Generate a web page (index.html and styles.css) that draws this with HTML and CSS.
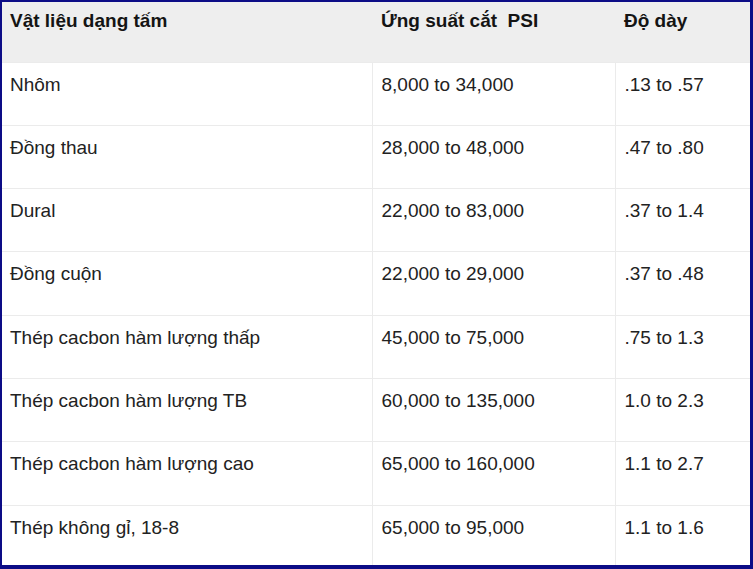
FILE: index.html
```html
<!DOCTYPE html>
<html lang="vi">
<head>
<meta charset="utf-8">
<link rel="stylesheet" href="styles.css">
</head>
<body>
<div class="frame">
<table class="tbl">
<colgroup><col class="c1"><col class="c2"><col class="c3"></colgroup>
<thead>
<tr><th>Vật liệu dạng tấm</th><th>Ứng suất cắt &nbsp;PSI</th><th>Độ dày</th></tr>
</thead>
<tbody>
<tr><td>Nhôm</td><td>8,000 to 34,000</td><td>.13 to .57</td></tr>
<tr><td>Đồng thau</td><td>28,000 to 48,000</td><td>.47 to .80</td></tr>
<tr><td>Dural</td><td>22,000 to 83,000</td><td>.37 to 1.4</td></tr>
<tr><td>Đồng cuộn</td><td>22,000 to 29,000</td><td>.37 to .48</td></tr>
<tr><td>Thép cacbon hàm lượng thấp</td><td>45,000 to 75,000</td><td>.75 to 1.3</td></tr>
<tr><td>Thép cacbon hàm lượng TB</td><td>60,000 to 135,000</td><td>1.0 to 2.3</td></tr>
<tr><td>Thép cacbon hàm lượng cao</td><td>65,000 to 160,000</td><td>1.1 to 2.7</td></tr>
<tr><td>Thép không gỉ, 18-8</td><td>65,000 to 95,000</td><td>1.1 to 1.6</td></tr>
</tbody>
</table>
</div>
</body>
</html>
```

FILE: styles.css
```css
html, body {
  margin: 0;
  padding: 0;
  background: #ffffff;
}
.frame {
  width: 753px;
  height: 569px;
  box-sizing: border-box;
  border-style: solid;
  border-color: #0c0c86;
  border-width: 2px 3px 4px 2px;
  overflow: hidden;
  background: #ffffff;
}
.tbl {
  width: 748px;
  table-layout: fixed;
  border-collapse: collapse;
  font-family: "Liberation Sans", Arial, sans-serif;
  font-size: 19px;
  color: #222222;
}
.c1 { width: 370px; }
.c2 { width: 243px; }
.c3 { width: 135px; }
.tbl th {
  background: #eeeeee;
  font-weight: bold;
  text-align: left;
  vertical-align: top;
  height: 60px;
  box-sizing: border-box;
  padding: 8px 8px 0 9px;
  color: #141414;
  white-space: nowrap;
}
.tbl th:first-child {
  padding-left: 8px;
}
.tbl td {
  vertical-align: top;
  height: 63.3px;
  box-sizing: border-box;
  padding: 11px 8px 0 9px;
  border-top: 1px solid #ebebeb;
  border-left: 1px solid #ebebeb;
  white-space: nowrap;
}
.tbl td:first-child {
  border-left: none;
  padding-left: 8px;
}
```
